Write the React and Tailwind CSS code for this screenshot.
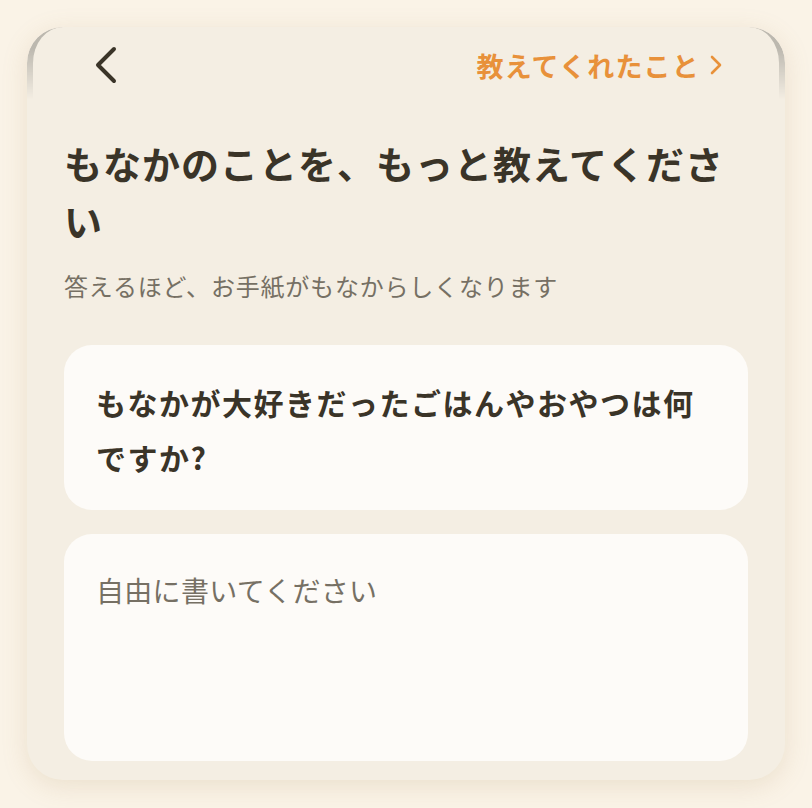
export default function App() {
  const font = { fontFamily: '"Noto Sans CJK JP", "Noto Sans", sans-serif' };
  return (
    <div className="w-full h-[808px] bg-[#faf3e7] pt-[27px] px-[27px]" style={font}>
      {/* card */}
      <div className="relative h-[753px] rounded-[36px] bg-[#f4eee3] shadow-[0_6px_26px_rgba(170,140,90,0.18)] px-[37px]">
        {/* top frame edge */}
        <div className="pointer-events-none absolute inset-x-0 top-0 h-[72px] rounded-t-[36px] border-x-[6px] border-[#bcb8af] [mask-image:linear-gradient(to_bottom,black_30%,transparent)]" />

        {/* header */}
        <div className="flex items-center justify-between h-[76px]">
          <button className="ml-[30px] w-[30px] h-[40px] flex items-center">
            <svg width="24" height="38" viewBox="0 0 24 38" fill="none">
              <path d="M20 3 L4 19 L20 35" stroke="#3a3428" strokeWidth="4" strokeLinecap="round" strokeLinejoin="round" />
            </svg>
          </button>
          <button className="mr-[26px] flex items-center gap-[10px] text-[#e8913a] text-[27px] tracking-[1.2px] font-bold leading-none">
            <span>教えてくれたこと</span>
            <svg width="12" height="20" viewBox="0 0 12 20" fill="none">
              <path d="M2 2 L10 10 L2 18" stroke="#e8913a" strokeWidth="2.6" strokeLinecap="round" strokeLinejoin="round" />
            </svg>
          </button>
        </div>

        {/* title */}
        <h1 className="mt-[31px] text-[38px] tracking-[1px] leading-[57px] font-bold text-[#3a3428]">
          もなかのことを、もっと教えてください
        </h1>
        <p className="mt-[20px] text-[24px] tracking-[0.8px] leading-[36px] text-[#767064]">
          答えるほど、お手紙がもなからしくなります
        </p>

        {/* question */}
        <div className="mt-[41px] rounded-[28px] bg-[#fdfbf8] px-[32px] pt-[30px] pb-[25px]">
          <p className="text-[30px] tracking-[1.5px] leading-[55px] font-bold text-[#3a3428]">
            もなかが大好きだったごはんやおやつは何ですか?
          </p>
        </div>

        {/* answer */}
        <textarea
          className="mt-[24px] block w-full h-[227px] resize-none rounded-[28px] bg-[#fdfbf8] px-[32px] pt-[36px] text-[28px] tracking-[0.3px] leading-[40px] text-[#3a3428] outline-none placeholder:text-[#767064]"
          placeholder="自由に書いてください"
        />
      </div>
    </div>
  );
}
